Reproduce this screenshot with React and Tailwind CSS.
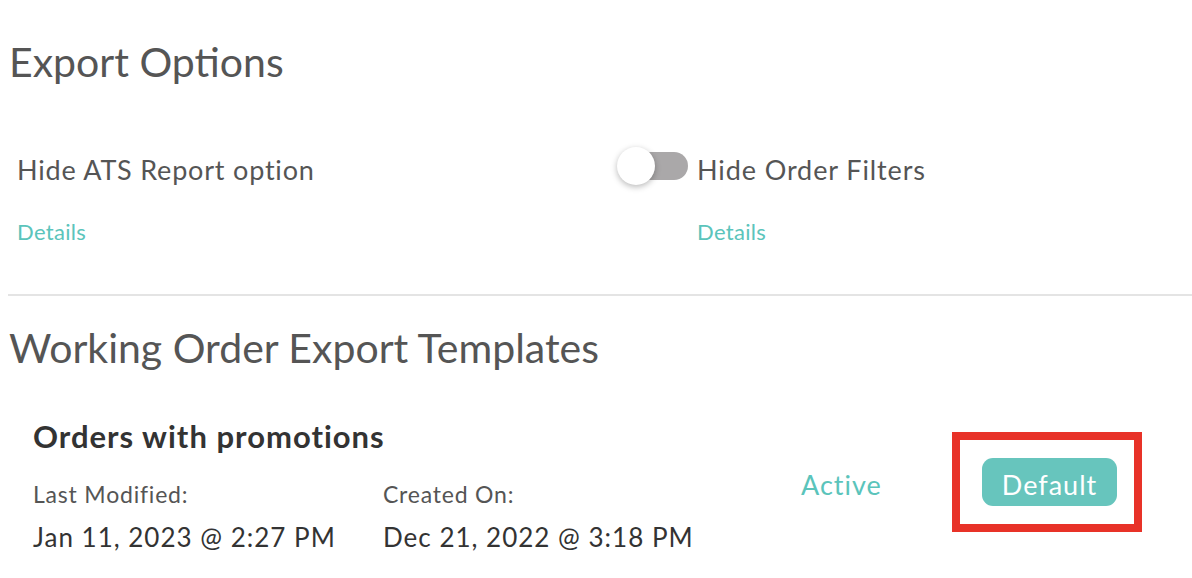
export default function App() {
  const font = { fontFamily: "Lato, 'Open Sans', sans-serif" };
  return (
    <div style={font} className="w-[1192px] h-[578px] bg-white overflow-hidden text-[#555]">
      <div className="pl-[9px] pt-[37px]">
        <h2 className="text-[41px] leading-[49px] font-normal text-[#555]">Export Options</h2>
      </div>
      <div className="flex pt-[66px] pl-[17px]">
        <div className="w-[600px]">
          <div className="pt-[2px] text-[27px] leading-[32px] tracking-[0.8px] text-[#555]">Hide ATS Report option</div>
          <div className="mt-[33px] text-[22px] leading-[26px] tracking-[0.3px] text-[#5bc4bb]">Details</div>
        </div>
        <div className="relative pl-[80px]">
          <div className="absolute left-[3px] top-[0px] w-[68px] h-[28px] rounded-full bg-[#aaa8a9]"></div>
          <div className="absolute left-[0px] top-[-5px] w-[38px] h-[38px] rounded-full bg-white shadow-[0_2px_6px_rgba(0,0,0,0.28)]"></div>
          <div className="pt-[2px] text-[27px] leading-[32px] tracking-[0.9px] text-[#555]">Hide Order Filters</div>
          <div className="mt-[33px] text-[22px] leading-[26px] tracking-[0.3px] text-[#5bc4bb]">Details</div>
        </div>
      </div>
      <div className="ml-[8px] mt-[49px] h-[2px] bg-[#e4e4e4]"></div>
      <div className="pl-[9px] pt-[27px]">
        <h2 className="text-[41px] leading-[49px] font-normal text-[#555]">Working Order Export Templates</h2>
      </div>
      <div className="flex items-start pl-[33px] pt-[45px]">
        <div className="w-[768px]">
          <div className="pt-[1px] text-[31px] leading-[37px] font-bold tracking-[1px] text-[#333]">Orders with promotions</div>
          <div className="flex mt-[25px]">
            <div className="w-[350px]">
              <div className="text-[23px] leading-[28px] tracking-[0.8px] text-[#555]">Last Modified:</div>
              <div className="mt-[14px] text-[26px] leading-[31px] tracking-[1px] text-[#333]">Jan 11, 2023 @ 2:27 PM</div>
            </div>
            <div>
              <div className="text-[23px] leading-[28px] tracking-[0.8px] text-[#555]">Created On:</div>
              <div className="mt-[14px] text-[26px] leading-[31px] tracking-[1px] text-[#333]">Dec 21, 2022 @ 3:18 PM</div>
            </div>
          </div>
        </div>
        <div className="flex items-center mt-[15px]">
          <div className="w-[151px] pt-[6px] text-[27px] leading-[32px] tracking-[1px] text-[#5bc4bb]">Active</div>
          <div className="w-[190px] h-[100px] border-[8px] border-[#e83228] flex items-center pl-[22px]">
            <div className="w-[135px] h-[48px] pt-[6px] rounded-[11px] bg-[#67c5bd] text-white text-[27px] leading-[42px] tracking-[1px] text-center">Default</div>
          </div>
        </div>
      </div>
    </div>
  );
}
